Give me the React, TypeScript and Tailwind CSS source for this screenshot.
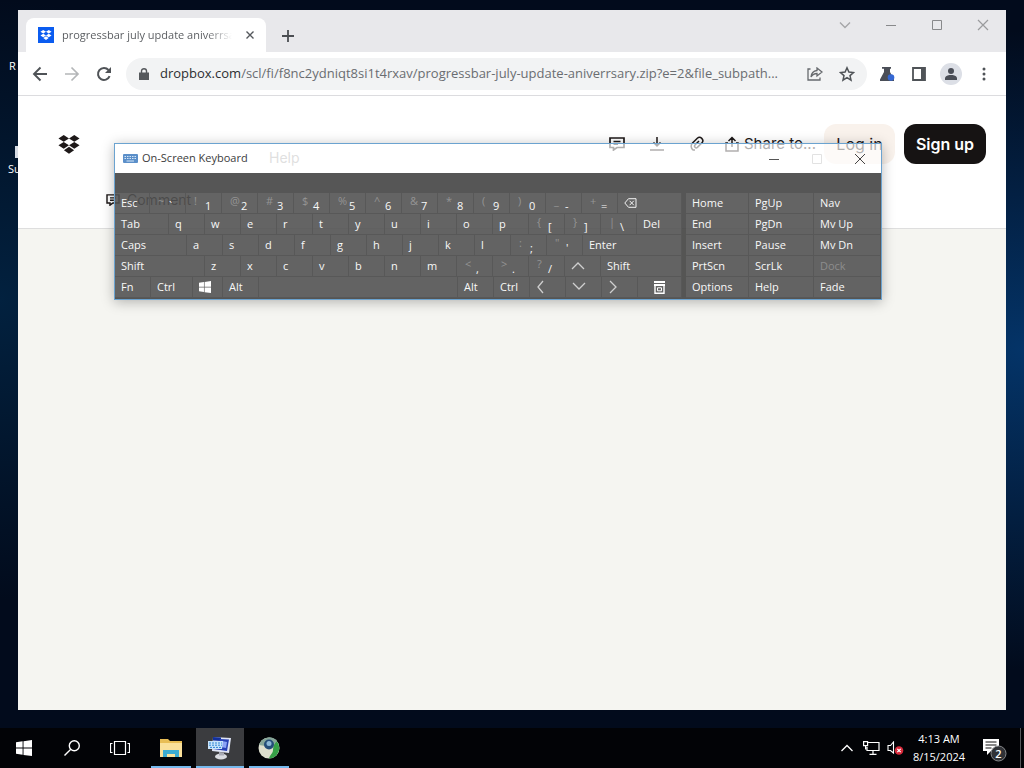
import type { ReactNode } from "react";

type KeyDef = {
  label?: string;
  shift?: string;
  width?: string;
  icon?: ReactNode;
  name?: string;
  dim?: boolean;
};

const Chevron = ({ d }: { d: string }) => (
  <svg viewBox="0 0 14 14" className="size-3.5" fill="none" stroke="#cfcfcf" strokeWidth="1.3">
    <path d={d} />
  </svg>
);

const Windows = ({ className }: { className: string }) => (
  <svg viewBox="0 0 16 16" className={className} fill="#fff">
    <path d="M0 2.3 6.6 1.3V7.6H0zM7.5 1.2 16 0V7.6H7.5zM0 8.5H6.6V14.8L0 13.8zM7.5 8.5H16V16L7.5 14.9z" />
  </svg>
);

const Backspace = () => (
  <svg viewBox="0 0 13 10" className="h-2.5 w-[13px]" fill="none" stroke="#f2f2f2">
    <path d="M4.5.7H12V9.3H4.5L.8 5zM5.6 2.8l4.2 4.4M9.8 2.8 5.6 7.2" />
  </svg>
);

const MenuIcon = () => (
  <svg viewBox="0 0 11 13" className="h-[13px] w-[11px]" fill="none" stroke="#fff">
    <path d="M0 1H11M0 4H11" strokeWidth="1.8" />
    <path d="M1 3V12.2H10V3" strokeWidth="1.4" />
    <path d="M3.500 6.800H7.500V9.800H3.500z" />
  </svg>
);

const letters = (s: string): KeyDef[] => s.split("").map((label) => ({ label }));

const rows: KeyDef[][] = [
  [
    { label: "Esc", width: "w-[35px]" },
    { label: "`", shift: "~" },
    { label: "1", shift: "!" },
    { label: "2", shift: "@" },
    { label: "3", shift: "#" },
    { label: "4", shift: "$" },
    { label: "5", shift: "%" },
    { label: "6", shift: "^" },
    { label: "7", shift: "&" },
    { label: "8", shift: "*" },
    { label: "9", shift: "(" },
    { label: "0", shift: ")" },
    { label: "-", shift: "_" },
    { label: "=", shift: "+" },
    { icon: <Backspace />, name: "Backspace", width: "flex-1" },
  ],
  [
    { label: "Tab", width: "w-[54px]" },
    ...letters("qwertyuiop"),
    { label: "[", shift: "{" },
    { label: "]", shift: "}" },
    { label: "\\", shift: "|" },
    { label: "Del", width: "flex-1" },
  ],
  [
    { label: "Caps", width: "w-[72px]" },
    ...letters("asdfghjkl"),
    { label: ";", shift: ":" },
    { label: "'", shift: '"' },
    { label: "Enter", width: "flex-1" },
  ],
  [
    { label: "Shift", width: "w-[90px]" },
    ...letters("zxcvbnm"),
    { label: ",", shift: "<" },
    { label: ".", shift: ">" },
    { label: "/", shift: "?" },
    { icon: <Chevron d="M1 10 7 4l6 6" />, name: "Up" },
    { label: "Shift", width: "flex-1" },
  ],
  [
    { label: "Fn" },
    { label: "Ctrl", width: "w-[42px]" },
    { icon: <Windows className="size-3" />, name: "Windows", width: "w-[30px]" },
    { label: "Alt" },
    { name: "Space", width: "flex-1" },
    { label: "Alt" },
    { label: "Ctrl" },
    { icon: <Chevron d="M7 1 2 7l5 6" />, name: "Left" },
    { icon: <Chevron d="M1 3 7 9l6-6" />, name: "Down" },
    { icon: <Chevron d="M2 1 8 7l-6 6" />, name: "Right" },
    { icon: <MenuIcon />, name: "Menu", width: "w-[44px]" },
  ],
];

const sideKeys: KeyDef[] = [
  { label: "Home" }, { label: "PgUp" }, { label: "Nav" },
  { label: "End" }, { label: "PgDn" }, { label: "Mv Up" },
  { label: "Insert" }, { label: "Pause" }, { label: "Mv Dn" },
  { label: "PrtScn" }, { label: "ScrLk" }, { label: "Dock", dim: true },
  { label: "Options" }, { label: "Help" }, { label: "Fade" },
];

function Key({ k }: { k: KeyDef }) {
  const width = k.width ?? "w-9";
  if (k.shift) {
    return (
      <button className={`${width} flex h-[21px] shrink-0 border-r border-b border-[#585858] bg-[#909090]/25 pl-2`}>
        <span className="w-[11px] text-left leading-4 text-[#949494]">{k.shift}</span>
        <span className="leading-[26px]">{k.label}</span>
      </button>
    );
  }
  return (
    <button
      aria-label={k.name}
      className={`${width} flex h-[21px] min-w-0 shrink-0 items-center border-r border-b border-[#585858] bg-[#909090]/25 ${k.name === "Menu" ? "justify-center" : "pl-1.5"} ${k.dim ? "text-[#8d8d8d]" : ""}`}
    >
      {k.icon ?? k.label}
    </button>
  );
}

function OnScreenKeyboard() {
  return (
    <section
      aria-label="On-Screen Keyboard"
      className="absolute top-[143px] left-[114px] w-[768px] border border-[#6ba3d0] shadow-[0_2px_12px_rgba(0,0,0,0.28)]"
    >
      <header className="flex h-[29px] items-center bg-white/65 pl-2 text-[#3c3c3c]">
        <svg viewBox="0 0 15 9" className="mr-1 h-[9px] w-[15px]">
          <rect width="15" height="9" rx="1" fill="#5b8fc9" />
          <path d="M1.5 2.5H13.500M1.500 4.500H13.500" stroke="#d5e6f7" strokeDasharray="1.500 1" />
          <path d="M3.500 7H11" stroke="#d5e6f7" />
        </svg>
        <h2 className="text-[11px]">On-Screen Keyboard</h2>
        <div className="ml-auto flex items-center">
          <button aria-label="Minimize" className="flex w-[43px] justify-center">
            <svg viewBox="0 0 10 10" className="size-2.5" stroke="#555"><path d="M0 5.500H10" /></svg>
          </button>
          <button aria-label="Maximize" disabled className="flex w-[43px] justify-center">
            <svg viewBox="0 0 10 10" className="size-2.5" fill="none" stroke="#e2e2e2"><path d="M.5.5h9v9h-9z" /></svg>
          </button>
          <button aria-label="Close" className="flex w-[43px] justify-center">
            <svg viewBox="0 0 10 10" className="size-2.5" stroke="#444"><path d="m0 0 10 10M10 0 0 10" /></svg>
          </button>
        </div>
      </header>
      <div className="flex bg-[#3a3a3a]/86 pt-5 pb-px text-[11px] text-[#f8f8f8]">
        <div className="flex flex-1 flex-col">
          {rows.map((row, i) => (
            <div key={i} className="flex">
              {row.map((k, j) => <Key key={j} k={k} />)}
            </div>
          ))}
        </div>
        <div className="ml-1 grid w-[195px] grid-cols-[63px_65px_1fr]">
          {sideKeys.map((k) => <Key key={k.label} k={{ ...k, width: "w-full" }} />)}
        </div>
      </div>
    </section>
  );
}

const DropboxMark = ({ className }: { className: string }) => (
  <svg viewBox="0 0 20 18" className={className} fill="currentColor">
    <path d="M5 0 10 3.200 5 6.400 0 3.200zM15 0l5 3.200-5 3.200-5-3.200zM5 6.600 10 9.800 5 13 0 9.800zM15 6.600l5 3.200-5 3.200-5-3.200zM10 11.200l4.800 3.200L10 17.800l-4.800-3.400z" />
  </svg>
);

const CommentIcon = ({ className }: { className: string }) => (
  <svg viewBox="0 0 16 14" className={className} fill="none" stroke="#1e1919" strokeWidth="1.700">
    <path d="M1 1h14v9.500H8L4.500 13v-2.500H1zM4.500 4.500h7M4.500 7.200h4.500" />
  </svg>
);

function Browser() {
  return (
    <main className="flex flex-1 flex-col bg-[#f5f5f1]">
      <div className="flex h-[42px] items-end bg-[#e8e8eb] pl-2">
        <div className="flex h-[34px] w-[240px] items-center rounded-t-lg bg-white pr-3 pl-3">
          <span className="mr-2 flex size-4 items-center justify-center bg-[#0b5cf0] text-white">
            <DropboxMark className="h-2.5 w-3" />
          </span>
          <span className="w-[170px] overflow-hidden bg-linear-to-r from-[#55585c] from-85% to-transparent bg-clip-text text-[11px] whitespace-nowrap text-transparent">
            progressbar july update aniverrsary
          </span>
          <button aria-label="Close tab" className="ml-auto">
            <svg viewBox="0 0 8 8" className="size-2" stroke="#55585c" strokeWidth="1.400"><path d="m.5.5 7 7M7.500.5l-7 7" /></svg>
          </button>
        </div>
        <button aria-label="New tab" className="mb-2.5 ml-4">
          <svg viewBox="0 0 12 12" className="size-3" stroke="#4b4e52" strokeWidth="1.800"><path d="M6 0v12M0 6h12" /></svg>
        </button>
        <div className="ml-auto flex self-start pt-[9px]">
          <button aria-label="Search tabs" className="flex w-[46px] justify-center">
            <svg viewBox="0 0 12 12" className="size-3" fill="none" stroke="#a5a6a8" strokeWidth="1.400"><path d="m1 3.500 5 5 5-5" /></svg>
          </button>
          <button aria-label="Minimize window" className="flex w-[46px] justify-center">
            <svg viewBox="0 0 12 12" className="size-3" stroke="#88898b"><path d="M1 6.500h10" /></svg>
          </button>
          <button aria-label="Maximize window" className="flex w-[46px] justify-center">
            <svg viewBox="0 0 12 12" className="size-3" fill="none" stroke="#88898b"><path d="M1.500 1.500h9v9h-9z" /></svg>
          </button>
          <button aria-label="Close window" className="flex w-[46px] justify-center">
            <svg viewBox="0 0 12 12" className="size-3" stroke="#9a9b9d" strokeWidth="1.200"><path d="m1 1 10 10M11 1 1 11" /></svg>
          </button>
        </div>
      </div>

      <div className="flex h-11 items-center border-b border-[#dcdcdf] bg-white pr-3.5 pl-3.5">
        <button aria-label="Back" className="mr-4">
          <svg viewBox="0 0 16 16" className="size-4" fill="none" stroke="#4f5357" strokeWidth="1.900"><path d="M15 8H2M8.500 1.500 2 8l6.500 6.500" /></svg>
        </button>
        <button aria-label="Forward" className="mr-4">
          <svg viewBox="0 0 16 16" className="size-4" fill="none" stroke="#b4b6b8" strokeWidth="1.700"><path d="M1 8h13M7.500 1.500 14 8l-6.500 6.500" /></svg>
        </button>
        <button aria-label="Reload">
          <svg viewBox="0 0 16 16" className="size-4" fill="none" stroke="#4f5357" strokeWidth="2"><path d="M13.600 10.200A6 6 0 1 1 12.500 4" /><path d="M15 1v6H9z" fill="#4f5357" stroke="none" /></svg>
        </button>
        <div className="ml-3.5 flex h-8 min-w-0 flex-1 items-center rounded-full bg-[#f2f3f4] pr-3 pl-[13px]">
          <svg viewBox="0 0 10 12" className="mr-[11px] h-3 w-2.5" fill="#55585c"><path d="M0 4.500h10V12H0z" /><path d="M2.500 5V3a2.500 2.300 0 0 1 5 0v2" fill="none" stroke="#55585c" strokeWidth="1.400" /></svg>
          <a href="#file" className="min-w-0 flex-1 truncate text-[13px] text-[#6a6d71]">
            <span className="text-[#2c2e31]">dropbox.com</span>/scl/fi/f8nc2ydniqt8si1t4rxav/progressbar-july-update-aniverrsary.zip?e=2&amp;file_subpath...
          </a>
          <button aria-label="Share this page" className="ml-3.5">
            <svg viewBox="0 0 16 14" className="h-3.5 w-4" fill="none" stroke="#66696d" strokeWidth="1.300"><path d="M3.500 2H1v11h12v-2.500M10 1l5 4-5 4V6.500c-3 0-4.500 1-6 3.500.3-3.500 2-6 6-6.500z" /></svg>
          </button>
          <button aria-label="Bookmark" className="ml-4">
            <svg viewBox="0 0 16 16" className="size-4" fill="none" stroke="#4f5357" strokeWidth="1.500"><path d="m8 1.800 1.900 4.300 4.600.4-3.500 3.100 1 4.600L8 11.700l-4 2.500 1-4.600L1.500 6.500l4.600-.4z" /></svg>
          </button>
        </div>
        <button aria-label="Labs" className="ml-3">
          <svg viewBox="0 0 16 16" className="size-4"><path d="M3 1h9v1.800h-1V6l4 7.500V15H1v-1.500L5 6V2.800H3z" fill="#4a4e57" /><circle cx="12" cy="11.500" r="3.300" fill="#3568d4" /></svg>
        </button>
        <button aria-label="Side panel" className="ml-[17px]">
          <svg viewBox="0 0 14 14" className="size-3.5"><path d="M1 1h12v12H1z" fill="none" stroke="#4f5357" strokeWidth="1.800" /><path d="M9 1h4v12H9z" fill="#4f5357" /></svg>
        </button>
        <button aria-label="Profile" className="ml-3.5 flex size-[22px] items-center justify-center rounded-full bg-[#dcdfe6]">
          <svg viewBox="0 0 12 12" className="size-3" fill="#4a4e57"><circle cx="6" cy="3" r="3" /><path d="M0 12V9.500C1 7.500 4 7 6 7s5 .5 6 2.500V12z" /></svg>
        </button>
        <button aria-label="Browser menu" className="ml-3.5">
          <svg viewBox="0 0 16 16" className="size-4" fill="#4f5357"><circle cx="8" cy="3" r="1.500" /><circle cx="8" cy="8" r="1.500" /><circle cx="8" cy="13" r="1.500" /></svg>
        </button>
      </div>

      <header className="h-[133px] border-b border-[#dedede] bg-white font-[Inter,sans-serif] text-base text-[#1e1919]">
        <div className="flex h-24 items-center pr-5 pl-10">
          <a href="#home" aria-label="Dropbox"><DropboxMark className="h-[19px] w-[22px]" /></a>
          <span className="mt-7 ml-[189px] text-sm text-[#a5a5a5]">Help</span>
          <div className="ml-auto flex items-center">
            <button aria-label="Comments"><CommentIcon className="h-3.5 w-4" /></button>
            <button aria-label="Download" className="ml-6">
              <svg viewBox="0 0 16 16" className="size-4" fill="none" stroke="#1e1919" strokeWidth="1.500"><path d="M8 1v9M4.500 6.500 8 10l3.500-3.500M1 14h14" /></svg>
            </button>
            <button aria-label="Copy link" className="ml-6">
              <svg viewBox="0 0 16 16" className="size-4" fill="none" stroke="#1e1919" strokeWidth="1.500"><path d="M10 5 6 9a1.700 1.700 0 0 0 2.400 2.400L13 6.800A3.300 3.300 0 0 0 8.300 2.200L3.500 7A4.700 4.700 0 0 0 4 14h2" /></svg>
            </button>
            <button className="ml-[19px] flex items-center text-[15px]">
              <svg viewBox="0 0 16 16" className="mr-1 size-4" fill="none" stroke="#1e1919" strokeWidth="1.500"><path d="M8 11V1.500M4.500 5 8 1.500 11.500 5M4 7H2v8h12V7h-2" /></svg>
              Share to...
            </button>
            <button className="ml-2 h-10 w-[71px] rounded-xl bg-[#f9f2ec]">Log in</button>
            <button className="ml-[9px] h-10 w-[82px] rounded-xl bg-[#161313] font-semibold text-white">Sign up</button>
          </div>
        </div>
        <button className="ml-[88px] flex items-center gap-[7px] text-sm leading-4">
          <CommentIcon className="h-3 w-3.5" />
          Comment
        </button>
      </header>
    </main>
  );
}

function Taskbar() {
  return (
    <footer className="flex h-10 items-stretch bg-[#020306] text-white">
      <button aria-label="Start" className="flex w-12 items-center justify-center"><Windows className="size-4" /></button>
      <button aria-label="Search" className="flex w-12 items-center justify-center">
        <svg viewBox="0 0 16 16" className="size-4" fill="none" stroke="#fff" strokeWidth="1.400"><circle cx="10.300" cy="5.700" r="5" /><path d="M6.800 9.200.5 15.500" /></svg>
      </button>
      <button aria-label="Task View" className="flex w-12 items-center justify-center">
        <svg viewBox="0 0 20 16" className="h-4 w-5" fill="none" stroke="#fff" strokeWidth="1.200"><path d="M4.500 1.500h11v13h-11zM2.500 3.500h-2v9h2M17.500 3.500h2v9h-2" /></svg>
      </button>
      <button aria-label="File Explorer" className="ml-[7px] flex w-10 flex-col items-center justify-between border-b-2 border-[#76b9ed] pt-2.5">
        <svg viewBox="0 0 22 20" className="h-5 w-[22px]"><path d="M0 1h8l2 2h12v16H0z" fill="#e8bd55" /><path d="M0 5h22v14H0z" fill="#fae09a" /><path d="M3 19v-7h16v7h-4v-3H7v3z" fill="#3cabd0" /></svg>
      </button>
      <button aria-label="On-Screen Keyboard" className="ml-[5px] flex w-12 flex-col items-center border-b-2 border-[#76b9ed] bg-[#3b3c3f] pt-2">
        <svg viewBox="0 0 24 24" className="size-6"><path d="m5 1 18 1-2 15-17-2z" fill="#dfe4f5" /><path d="m5 1 8 .5V5l-8-.5z" fill="#12309c" /><path d="m12 3 9 .5L19 15l-14-2z" fill="#2740b5" /><path d="m14 5 5 1-1 6-5-1z" fill="#8aa2f5" /><path d="M0 5h15l-1 8H0z" fill="#c9e4fb" /><path d="M1 7h13M1 9.200h13M2 11.400h11" stroke="#2f86d2" strokeDasharray="2 1" /><ellipse cx="13" cy="20.500" rx="6" ry="3" fill="#d9dbe0" /><path d="m11 16 5 .5v3h-5z" fill="#a9abb5" /></svg>
      </button>
      <button aria-label="Browser" className="ml-[5px] flex w-10 flex-col items-center border-b-2 border-[#76b9ed] pt-2">
        <svg viewBox="0 0 22 22" className="mt-px size-[22px]"><circle cx="11" cy="11" r="10.500" fill="#dedfce" /><path d="M18 3.500A10.500 10.500 0 0 1 11 21.500c1-4 4-5 4-8.500 0-3 1-6 3-9.500z" fill="#36a047" /><path d="M1 8A10.500 10.500 0 0 1 19 4l-5 6z" fill="#86a699" /><circle cx="11" cy="7.500" r="5" fill="#244d79" /><circle cx="11" cy="6.500" r="2.500" fill="#8cb8d6" /></svg>
      </button>
      <div className="ml-auto flex items-center">
        <button aria-label="Show hidden icons">
          <svg viewBox="0 0 12 8" className="h-2 w-3" fill="none" stroke="#fff" strokeWidth="1.300"><path d="m.5 7 5.500-5.500L11.500 7" /></svg>
        </button>
        <button aria-label="Network" className="ml-2.5">
          <svg viewBox="0 0 17 14" className="h-3.5 w-[17px]" fill="none" stroke="#fff" strokeWidth="1.200"><path d="M5 1.500h11v8H4V6M10 9.500v3.500M6.500 13.300h7M.6.600h4v4h-4zM2.600 4.600v4" /></svg>
        </button>
        <button aria-label="Sound muted" className="ml-[7px]">
          <svg viewBox="0 0 17 14" className="h-3.5 w-[17px]" fill="none"><path d="M1 4.500h2.500L6.500 1v11L3.500 9.500H1z" stroke="#fff" strokeWidth="1.100" /><circle cx="12" cy="9.500" r="4.300" fill="#d92b3c" /><path d="m10.300 7.800 3.400 3.400M13.700 7.800l-3.400 3.400" stroke="#fff" strokeWidth="1.200" /></svg>
        </button>
        <div className="ml-2 w-[54px] text-center text-[11px] leading-[18px] whitespace-nowrap">
          <div>4:13 AM</div>
          <div>8/15/2024</div>
        </div>
        <button aria-label="Notifications, 2 new" className="ml-[17px]">
          <svg viewBox="0 0 24 24" className="mt-1 size-6"><path d="M0 1h16v12H8l-4 4v-4H0z" fill="#fff" /><path d="M2.500 4h11M2.500 7h11M2.500 10h6" stroke="#111" /><circle cx="15.500" cy="15.500" r="7.500" fill="#303236" stroke="#85878a" /><text x="15.500" y="19.500" textAnchor="middle" fill="#fff" fontSize="11" fontWeight="600" fontFamily="Open Sans">2</text></svg>
        </button>
        <div className="ml-[13px] h-10 w-1 border-l border-[#55575a]" />
      </div>
    </footer>
  );
}

export default function App() {
  return (
    <div className="relative flex min-h-screen flex-col overflow-hidden bg-[#020b1c] bg-[radial-gradient(ellipse_420px_320px_at_right_350px,#043468,transparent),radial-gradient(ellipse_300px_300px_at_left_300px,#02213f,transparent)] font-['Open_Sans','Noto_Sans',sans-serif]">
      <span className="absolute top-[58px] left-[9px] text-[11px] text-white">R</span>
      <span className="absolute top-[146px] left-[15px] h-3 w-3 bg-[#d8dde5]" />
      <span className="absolute top-[161px] left-2 text-[11px] text-white">Su</span>
      <div className="relative flex flex-1 flex-col px-[18px] pt-2.5 pb-[18px]">
        <Browser />
      </div>
      <OnScreenKeyboard />
      <Taskbar />
    </div>
  );
}
